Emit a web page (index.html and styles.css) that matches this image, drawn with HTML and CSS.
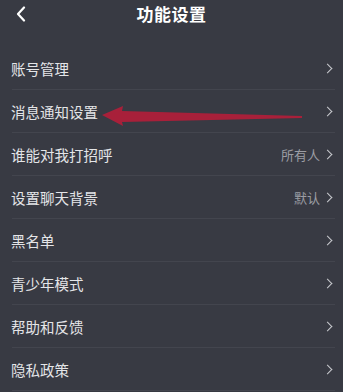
FILE: index.html
```html
<!DOCTYPE html>
<html lang="zh-CN">
<head>
  <meta charset="UTF-8">
  <title>功能设置</title>
  <link rel="stylesheet" href="styles.css">
</head>
<body>

  <div class="page">
    <div class="topbar">
      <svg class="back" width="10" height="16" viewBox="0 0 10 16">
        <path d="M8 1.5 L2 8 L8 14.5" fill="none" stroke="#fff" stroke-width="2.2" stroke-linecap="round" stroke-linejoin="round"/>
      </svg>
      <h1>功能设置</h1>
    </div>

    <ul class="menu">
      <li class="row"><span class="label">账号管理</span><span class="chev"></span></li>
      <li class="row"><span class="label">消息通知设置</span><span class="chev"></span></li>
      <li class="row"><span class="label">谁能对我打招呼</span><span class="value">所有人</span><span class="chev"></span></li>
      <li class="row"><span class="label">设置聊天背景</span><span class="value">默认</span><span class="chev"></span></li>
      <li class="row"><span class="label">黑名单</span><span class="chev"></span></li>
      <li class="row"><span class="label">青少年模式</span><span class="chev"></span></li>
      <li class="row"><span class="label">帮助和反馈</span><span class="chev"></span></li>
      <li class="row"><span class="label">隐私政策</span><span class="chev"></span></li>
    </ul>

    <!-- annotation arrow drawn over the list -->
    <svg class="pointer" width="210" height="24" viewBox="0 0 210 24">
      <path d="M0 11 L21 2 L20 7 L200 12 L200 14 L20 18 L21 22 Z" fill="#a8203a"/>
    </svg>
  </div>

</body>
</html>
```

FILE: styles.css
```css
html, body {
  margin: 0;
  background: #383a43;
}
body {
  font-family: "Noto Sans CJK SC", "Noto Sans", sans-serif;
  color: #e4e5e8;
}
.page {
  position: relative;
  height: 392px;
  overflow: hidden;
}
.topbar {
  display: flex;
  align-items: center;
  justify-content: center;
  position: relative;
  height: 27px;
  padding-bottom: 20px;
}
.topbar h1 {
  margin: 0;
  font-size: 17px;
  font-weight: bold;
  color: #fff;
  letter-spacing: 0.5px;
}
.back {
  position: absolute;
  left: 16px;
  top: 6px;
}
.menu {
  list-style: none;
  margin: 0;
  padding: 0 8px 0 12px;
}
.row {
  display: flex;
  align-items: center;
  height: 42px;
  border-bottom: 1px solid #43454e;
  font-size: 14.5px;
}
.label {
  flex: 1;
  margin-left: -1px;
}
.value {
  font-size: 13px;
  color: #9b9da4;
  margin-right: 4px;
}
.chev {
  width: 6px;
  height: 6px;
  border-top: 1.5px solid #c9cacf;
  border-right: 1.5px solid #c9cacf;
  transform: rotate(45deg);
  margin-right: 4px;
}
.pointer {
  position: absolute;
  left: 102px;
  top: 104px;
}
```
